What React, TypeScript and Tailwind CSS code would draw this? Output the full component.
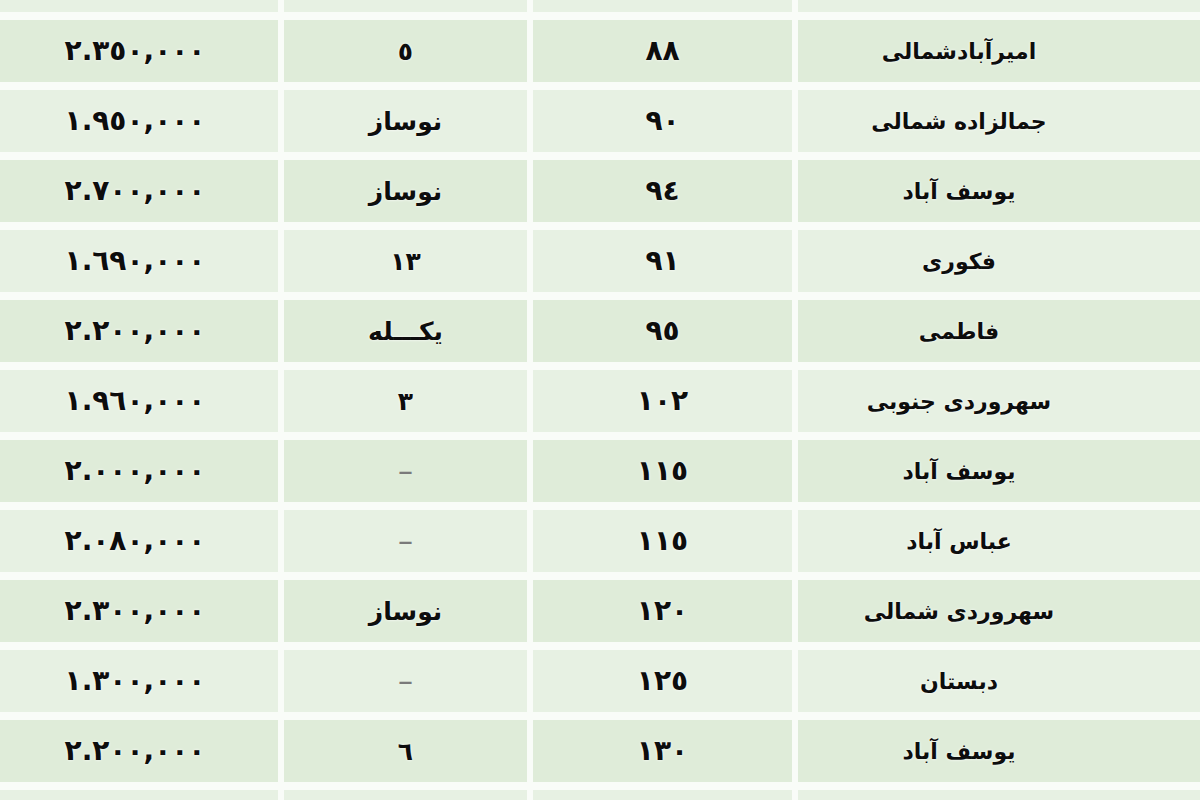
import React from "react";

type Row = [string, string, string, string];

const rows: Row[] = [
  ["٢.٣٠٠,٠٠٠", "", "٨٠", "برزن بزرگ"],
  ["٢.٣٥٠,٠٠٠", "٥", "٨٨", "امیرآبادشمالی"],
  ["١.٩٥٠,٠٠٠", "نوساز", "٩٠", "جمالزاده شمالی"],
  ["٢.٧٠٠,٠٠٠", "نوساز", "٩٤", "یوسف آباد"],
  ["١.٦٩٠,٠٠٠", "١٣", "٩١", "فکوری"],
  ["٢.٢٠٠,٠٠٠", "یکـــله", "٩٥", "فاطمی"],
  ["١.٩٦٠,٠٠٠", "٣", "١٠٢", "سهروردی جنوبی"],
  ["٢.٠٠٠,٠٠٠", "–", "١١٥", "یوسف آباد"],
  ["٢.٠٨٠,٠٠٠", "–", "١١٥", "عباس آباد"],
  ["٢.٣٠٠,٠٠٠", "نوساز", "١٢٠", "سهروردی شمالی"],
  ["١.٣٠٠,٠٠٠", "–", "١٢٥", "دبستان"],
  ["٢.٢٠٠,٠٠٠", "٦", "١٣٠", "یوسف آباد"],
  ["٢.٤٠٠,٠٠٠", "٢", "١٣٥", "جمالزاده"],
];

const font = { fontFamily: '"DejaVu Sans", "Noto Sans", sans-serif' };

export default function App() {
  return (
    <div className="w-[1200px] h-[800px] overflow-hidden bg-[#f9fcf8]" style={font}>
      <div className="flex flex-col gap-y-[8px] -mt-[50px]">
        {rows.map((r, i) => {
          const bg = i % 2 === 1 ? "bg-[#dfecd9]" : "bg-[#e7f1e3]";
          return (
            <div
              key={i}
              className="grid grid-cols-[278px_243px_259px_1fr] gap-x-[6px] h-[62px]"
            >
              <div className={`${bg} flex items-center justify-center pr-[8px]`}>
                <span
                  dir="ltr"
                  className="text-[28px] leading-none font-bold text-[#0d0d0d] tracking-[5px] [text-shadow:0_0_3px_#fff]"
                >
                  {r[0]}
                </span>
              </div>
              <div className={`${bg} flex items-center justify-center`}>
                <span
                  dir="rtl"
                  className={
                    r[1] === "–"
                      ? "text-[30px] leading-none text-[#7a7a7a]"
                      : "text-[25px] leading-none font-bold text-[#0d0d0d] [text-shadow:0_0_3px_#fff]"
                  }
                >
                  {r[1]}
                </span>
              </div>
              <div className={`${bg} flex items-center justify-center`}>
                <span className="text-[28px] leading-none font-bold text-[#0d0d0d] tracking-[2px] [text-shadow:0_0_3px_#fff]">
                  {r[2]}
                </span>
              </div>
              <div className={`${bg} flex items-center justify-center pr-[80px]`}>
                <span
                  dir="rtl"
                  className="text-[22px] font-bold text-[#0d0d0d] [text-shadow:0_0_3px_#fff]"
                >
                  {r[3]}
                </span>
              </div>
            </div>
          );
        })}
      </div>
    </div>
  );
}
